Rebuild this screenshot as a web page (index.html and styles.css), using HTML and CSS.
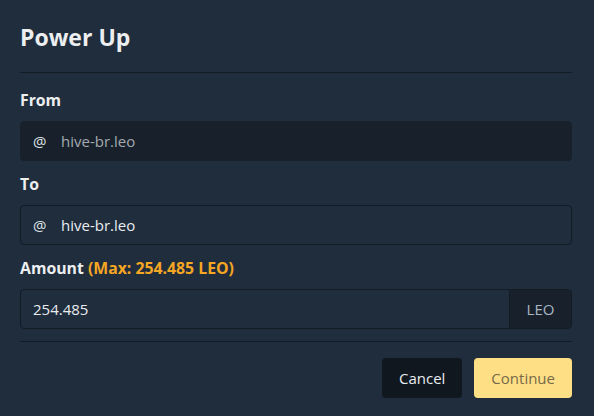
FILE: index.html
```html
<!DOCTYPE html>
<html>
<head>
<meta charset="utf-8">
<link rel="stylesheet" href="styles.css">
</head>
<body>
<div class="modal">
  <div class="modal-header">
    <h1 class="title">Power Up</h1>
  </div>
  <div class="modal-body">
    <div class="group">
      <label class="label">From</label>
      <div class="input disabled">
        <span class="at">@</span>
        <span class="value muted">hive-br.leo</span>
      </div>
    </div>
    <div class="group">
      <label class="label">To</label>
      <div class="input">
        <span class="at">@</span>
        <span class="value">hive-br.leo</span>
      </div>
    </div>
    <div class="group last">
      <label class="label">Amount <span class="max">(Max: 254.485 LEO)</span></label>
      <div class="input amount">
        <span class="value amount-value">254.485</span>
        <span class="addon">LEO</span>
      </div>
    </div>
  </div>
  <div class="modal-footer">
    <button class="btn cancel">Cancel</button>
    <button class="btn continue">Continue</button>
  </div>
</div>
</body>
</html>
```
FILE: styles.css
```css
html, body {
  margin: 0;
  padding: 0;
  background: #1f2d3d;
}
body {
  font-family: "Open Sans", "Noto Sans", sans-serif;
  color: #e9ecef;
  width: 594px;
  height: 416px;
  overflow: hidden;
}
.modal {
  padding: 0 22px 0 20px;
}
.modal-header {
  padding: 20px 0 18px;
  border-bottom: 1px solid #131b24;
}
.title {
  margin: 0;
  font-size: 23px;
  line-height: 34px;
  font-weight: 700;
  color: #eceef0;
}
.modal-body {
  padding: 16px 0 12px;
  border-bottom: 1px solid #131b24;
}
.group {
  margin-bottom: 12px;
}
.group.last {
  margin-bottom: 0;
}
.label {
  display: block;
  font-size: 15.8px;
  line-height: 22px;
  font-weight: 700;
  margin-bottom: 10px;
  color: #eceef0;
}
.max {
  color: #f5a623;
}
.input {
  height: 40px;
  box-sizing: border-box;
  border: 1px solid #131b24;
  border-radius: 4px;
  display: flex;
  align-items: center;
  padding-left: 12px;
  font-size: 15px;
}
.input.disabled {
  background: #18212b;
  border-color: #18212b;
}
.at {
  width: 28px;
  color: #dfe3e7;
}
.value {
  color: #e9ecef;
}
.value.muted {
  color: #a3a9b0;
}
.amount {
  padding-left: 0;
  overflow: hidden;
}
.amount-value {
  flex: 1;
  padding-left: 12px;
}
.addon {
  align-self: stretch;
  width: 61px;
  display: flex;
  align-items: center;
  justify-content: center;
  background: #18212b;
  border-left: 1px solid #131b24;
  color: #a9b6c4;
}
.modal-footer {
  display: flex;
  justify-content: flex-end;
  gap: 12px;
  padding-top: 16px;
}
.btn {
  height: 40px;
  border: none;
  border-radius: 4px;
  font-family: inherit;
  font-size: 15px;
  padding: 0 17px;
}
.cancel {
  background: #10171f;
  color: #e9ecef;
}
.continue {
  background: #ffdf85;
  color: #766a4a;
}
```
